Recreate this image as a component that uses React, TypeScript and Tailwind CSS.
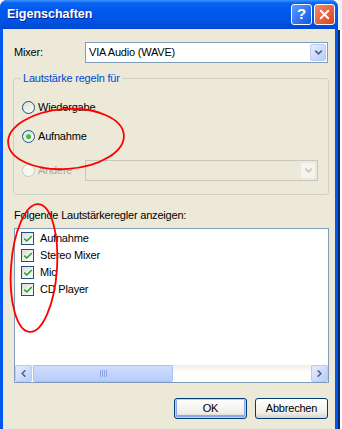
import { Check, ChevronDown, ChevronLeft, ChevronRight, X } from "lucide-react";

const font = "font-['Liberation_Sans',Arial,sans-serif]";

function Radio({ checked, disabled }: { checked?: boolean; disabled?: boolean }) {
  return (
    <span
      className={`flex h-[13px] w-[13px] shrink-0 items-center justify-center rounded-full border ${
        disabled
          ? "border-[#cac8bb] bg-[#f7f7f3]"
          : "border-[#1c5180] bg-[linear-gradient(135deg,#dcdcd7,#ffffff)]"
      }`}
    >
      {checked && (
        <span className="h-[5px] w-[5px] rounded-full bg-[radial-gradient(circle_at_35%_35%,#55d151,#21a121)]" />
      )}
    </span>
  );
}

function CheckBox() {
  return (
    <span className="flex h-[13px] w-[13px] shrink-0 items-center justify-center border border-[#1c5180] bg-[linear-gradient(135deg,#dcdcd7,#ffffff)]">
      <Check size={10} strokeWidth={3.5} className="text-[#21a121]" />
    </span>
  );
}

function Combo({ value, disabled, width }: { value?: string; disabled?: boolean; width: string }) {
  return (
    <div
      className={`flex h-[21px] ${width} items-center border p-[1px] ${
        disabled ? "border-[#c9c7ba] bg-[#ece9d8]" : "border-[#7f9db9] bg-white"
      }`}
    >
      <span className="flex-1 pl-[2px] text-[11px] leading-[13px] tracking-[-0.2px] text-black">{value}</span>
      <span
        className={`flex h-full w-[16px] items-center justify-center rounded-[2px] border ${
          disabled
            ? "border-[#e9e8e3] bg-[#f4f3ee] text-[#c9c7ba]"
            : "border-[#b9cbf3] bg-[linear-gradient(135deg,#e5edfe,#b9cdfa)] text-[#4d6185]"
        }`}
      >
        <ChevronDown size={11} strokeWidth={3.5} />
      </span>
    </div>
  );
}

function Button({ label, isDefault }: { label: string; isDefault?: boolean }) {
  return (
    <button
      className={`h-[21px] w-[73px] rounded-[3px] border border-[#003c74] bg-[linear-gradient(#ffffff,#f0efea_70%,#d8d3c6)] text-[11px] text-black ${
        isDefault ? "shadow-[inset_0_0_0_1px_#bcd2f7,inset_0_-1px_0_2px_#8aa8ec]" : ""
      }`}
    >
      {label}
    </button>
  );
}

export default function App() {
  const items = ["Aufnahme", "Stereo Mixer", "Mic", "CD Player"];

  return (
    <div className={`relative flex h-[429px] w-[342px] overflow-hidden bg-white ${font}`}>
      <div className="flex w-[338px] flex-col rounded-t-[7px] bg-[#0058ee]">
        {/* title bar */}
        <div className="flex h-[29px] shrink-0 items-center rounded-t-[7px] bg-[linear-gradient(#3d95ff_0px,#0a63f0_3px,#0058ee_10px,#0054e3_22px,#0046d2_29px)] pl-[7px] pr-[3px]">
          <span className="flex-1 text-[12.5px] font-bold text-white [text-shadow:1px_1px_0_#0a1e8c]">
            Eigenschaften
          </span>
          <div className="flex gap-[2px]">
            <span className="flex h-[21px] w-[21px] items-center justify-center rounded-[3px] border border-white bg-[linear-gradient(135deg,#5b9cff,#1256e6)] text-[15px] font-bold text-white">
              ?
            </span>
            <span className="flex h-[21px] w-[21px] items-center justify-center rounded-[3px] border border-white bg-[linear-gradient(135deg,#f08a6d,#d9431f)] text-white">
              <X size={15} strokeWidth={3} />
            </span>
          </div>
        </div>

        {/* client area */}
        <div className="mx-[3px] flex flex-1 flex-col bg-[#ece9d8] text-[11px] leading-[13px] tracking-[-0.2px] text-black">
          <div className="mt-[13px] flex items-center pl-[11px]">
            <span className="w-[71px]">Mixer:</span>
            <Combo value="VIA Audio (WAVE)" width="w-[243px]" />
          </div>

          <div className="relative ml-[10px] mt-[15px] h-[117px] w-[316px] rounded-[3px] border border-[#d0d0bf]">
            <span className="absolute -top-[7px] left-[7px] bg-[#ece9d8] px-[2px] text-[#0046d5]">
              Lautstärke regeln für
            </span>
            <div className="flex flex-col pl-[8px] pt-[22px]">
              <div className="flex items-center">
                <Radio />
                <span className="ml-[3px]">Wiedergabe</span>
              </div>
              <div className="mt-[16px] flex items-center">
                <Radio checked />
                <span className="ml-[3px]">Aufnahme</span>
              </div>
              <div className="mt-[17px] flex items-center">
                <div className="flex w-[63px] items-center">
                  <Radio disabled />
                  <span className="ml-[3px] text-[#aca899]">Andere</span>
                </div>
                <Combo disabled width="w-[233px]" />
              </div>
            </div>
          </div>

          <span className="mt-[14px] pl-[11px]">Folgende Lautstärkeregler anzeigen:</span>

          <div className="ml-[11px] mt-[6px] flex h-[155px] w-[315px] flex-col border border-[#7f9db9] bg-white">
            <div className="flex flex-1 flex-col pl-[6px] pt-[1px]">
              {items.map((item) => (
                <div key={item} className="flex h-[17px] items-center">
                  <CheckBox />
                  <span className="ml-[6px]">{item}</span>
                </div>
              ))}
            </div>
            <div className="flex h-[17px] bg-[linear-gradient(#eeede5,#fefefb_40%)]">
              <span className="flex w-[17px] items-center justify-center rounded-[2px] border border-[#b9cbf3] bg-[linear-gradient(135deg,#e5edfe,#b9cdfa)] text-[#4d6185]">
                <ChevronLeft size={11} strokeWidth={3.5} />
              </span>
              <span className="ml-[1px] flex w-[140px] items-center justify-center gap-[1px] rounded-[2px] border border-[#a8bff2] bg-[linear-gradient(#cfdcfd,#b8cdfb)]">
                {[0, 1, 2, 3].map((i) => (
                  <span key={i} className="h-[7px] w-[1px] bg-[#8ca6e8]" />
                ))}
              </span>
              <span className="flex-1" />
              <span className="flex w-[17px] items-center justify-center rounded-[2px] border border-[#b9cbf3] bg-[linear-gradient(135deg,#e5edfe,#b9cdfa)] text-[#4d6185]">
                <ChevronRight size={11} strokeWidth={3.5} />
              </span>
            </div>
          </div>

          <div className="mt-[15px] flex justify-end gap-[8px] pr-[7px]">
            <Button label="OK" isDefault />
            <Button label="Abbrechen" />
          </div>
        </div>
      </div>

      <div className="flex w-[4px] flex-col">
        <div className="h-[30px] bg-[#f0f0f0]" />
        <div className="flex flex-1">
          <div className="w-[2px] bg-[#0a246a]" />
          <div className="flex-1 bg-white" />
        </div>
      </div>

      {/* red hand-drawn annotations */}
      <svg className="pointer-events-none absolute inset-0" width="342" height="429" viewBox="0 0 342 429">
        <g fill="none" stroke="#ff0000" strokeWidth="1.8">
          <ellipse cx="66" cy="139" rx="58" ry="30" transform="rotate(-4 66 139)" />
          <ellipse cx="34" cy="268" rx="23" ry="64" transform="rotate(4 34 268)" />
        </g>
      </svg>
    </div>
  );
}
